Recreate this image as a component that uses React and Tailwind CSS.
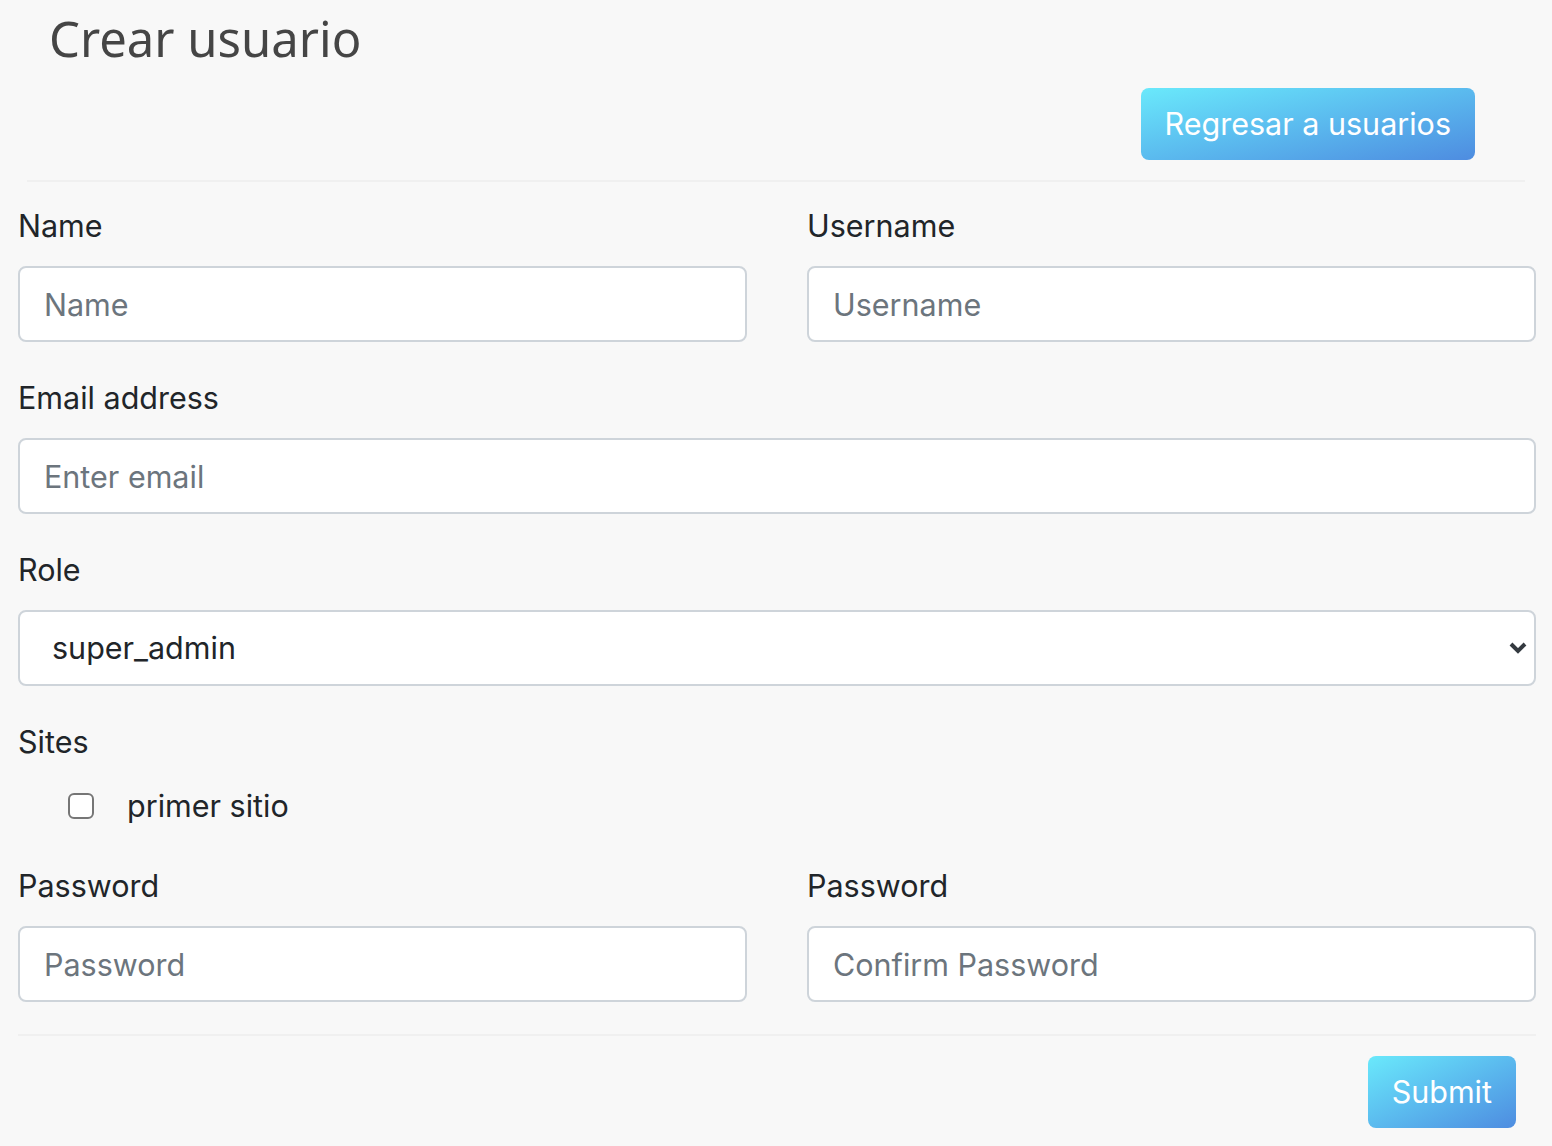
// App.jsx - Crear usuario form
const input =
  "w-full h-[76px] rounded-[8px] border-2 border-[#ced4da] bg-white px-[24px] text-[30.5px] text-[#495057] placeholder:text-[#6c757d] outline-none";

function Field({ label, placeholder, type = "text" }) {
  return (
    <div className="mb-[32px] flex flex-col">
      <label className="mb-[16px] text-[30.5px] leading-[48px] text-[#212529]">{label}</label>
      <input type={type} placeholder={placeholder} className={input} />
    </div>
  );
}

export default function App() {
  return (
    <div className="min-h-screen bg-[#f8f8f8] font-['Inter','Liberation_Sans',sans-serif]">
      {/* header */}
      <div className="px-[27px]">
        <h1 className="pl-[22px] pt-[6px] font-['Noto_Sans',sans-serif] text-[49px] leading-[64px] text-[#454545]">
          Crear usuario
        </h1>
        <div className="mt-[18px] flex justify-end pr-[50px]">
          <button className="h-[72px] rounded-[8px] bg-linear-to-br from-[#6ae9fb] to-[#4e8ce0] px-[24px] text-[30.5px] text-white">
            Regresar a usuarios
          </button>
        </div>
        <div className="mt-[20px] h-[2px] bg-[#f0f0f0]" />
      </div>

      {/* form */}
      <form className="pl-[18px] pr-[16px] pt-[20px]">
        <div className="grid grid-cols-2 gap-x-[60px]">
          <Field label="Name" placeholder="Name" />
          <Field label="Username" placeholder="Username" />
        </div>
        <Field label="Email address" placeholder="Enter email" type="email" />

        <div className="mb-[32px] flex flex-col">
          <label className="mb-[16px] text-[30.5px] leading-[48px] text-[#212529]">Role</label>
          <div className="relative">
            <select className="h-[76px] w-full appearance-none rounded-[8px] border-2 border-[#ced4da] bg-white px-[32px] text-[30.5px] text-[#212529] outline-none">
              <option>super_admin</option>
            </select>
            <svg
              className="pointer-events-none absolute right-[8px] top-[29px] h-[18px] w-[20px]"
              viewBox="0 0 20 18"
              fill="none"
              stroke="#343a40"
              strokeWidth="4"
            >
              <path d="M3 5l7 7 7-7" />
            </svg>
          </div>
        </div>

        <div className="mb-[32px] flex flex-col">
          <label className="mb-[16px] text-[30.5px] leading-[48px] text-[#212529]">Sites</label>
          <div className="flex items-center pl-[50px] leading-[48px]">
            <span className="h-[26px] w-[26px] rounded-[6px] border-2 border-[#767676] bg-white" />
            <span className="ml-[33px] text-[30.5px] text-[#212529]">primer sitio</span>
          </div>
        </div>

        <div className="grid grid-cols-2 gap-x-[60px]">
          <Field label="Password" placeholder="Password" type="password" />
          <Field label="Password" placeholder="Confirm Password" type="password" />
        </div>

        <div className="h-[2px] bg-[#f0f0f0]" />
        <div className="flex justify-end pr-[20px] pt-[20px] pb-[18px]">
          <button className="h-[72px] rounded-[8px] bg-linear-to-br from-[#6ae9fb] to-[#4e8ce0] px-[24px] text-[30.5px] text-white">
            Submit
          </button>
        </div>
      </form>
    </div>
  );
}
